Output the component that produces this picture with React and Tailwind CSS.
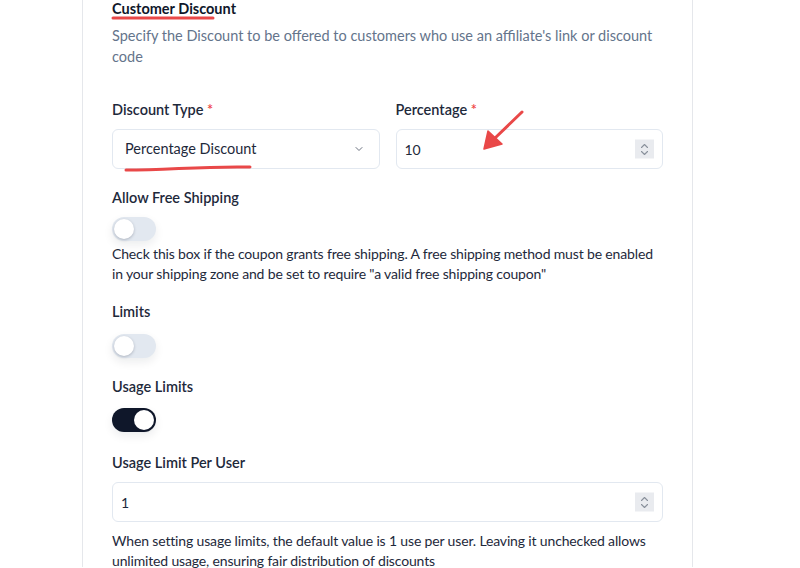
import React from "react";

function Toggle({ on }) {
  return (
    <div
      className={
        "relative h-6 w-11 rounded-full shadow-[0_4px_10px_rgba(15,23,42,0.08)] " +
        (on ? "bg-[#0f172a]" : "bg-[#e2e8f0]")
      }
    >
      <div
        className={
          "absolute top-[2px] h-5 w-5 rounded-full bg-white shadow-[0_1px_3px_rgba(15,23,42,0.25)] " +
          (on ? "left-[22px]" : "left-[2px]")
        }
      />
    </div>
  );
}

function Spinner() {
  return (
    <div className="absolute right-2 top-1/2 flex h-[19px] w-[19px] -translate-y-1/2 flex-col items-center justify-center bg-[#e9ebef]">
      <svg width="9" height="14" viewBox="0 0 9 14" fill="none" stroke="#8a919c" strokeWidth="1.1" strokeLinecap="round" strokeLinejoin="round">
        <path d="M1.5 5 L4.5 2 L7.5 5" />
        <path d="M1.5 9 L4.5 12 L7.5 9" />
      </svg>
    </div>
  );
}

export default function App() {
  return (
    <div className="relative h-[568px] w-[800px] overflow-hidden bg-white font-['Lato',sans-serif] text-[#1e293b]">
      <div className="ml-[82px] h-full w-[611px] border-x border-[#e5e7eb] px-[29px]">
        <div className="-mt-[1px] text-[14.5px] font-bold leading-5 text-[#0f172a]">Customer Discount</div>
        <p className="mt-[6px] text-[14.5px] leading-[21px] text-[#64748b]">
          Specify the Discount to be offered to customers who use an affiliate's link or discount code
        </p>

        <div className="mt-[33px] grid grid-cols-2 gap-4">
          <div>
            <div className="text-[14.5px] font-semibold leading-5">
              Discount Type <span className="text-[#ef4444]">*</span>
            </div>
            <div className="mt-[9px] flex h-10 items-center justify-between rounded-md border border-[#e2e8f0] px-3 text-[14.5px]">
              <span>Percentage Discount</span>
              <svg width="12" height="12" viewBox="0 0 24 24" fill="none" stroke="#6b7280" strokeWidth="2" strokeLinecap="round" strokeLinejoin="round" className="mr-[2px]">
                <path d="M6 9l6 6 6-6" />
              </svg>
            </div>
          </div>
          <div>
            <div className="text-[14.5px] font-semibold leading-5">
              Percentage <span className="text-[#ef4444]">*</span>
            </div>
            <div className="relative mt-[9px] flex h-10 items-center rounded-md border border-[#e2e8f0] px-2 text-[14px]">
              <span>10</span>
              <Spinner />
            </div>
          </div>
        </div>

        <div className="mt-[19px] text-[14.5px] font-semibold leading-5">Allow Free Shipping</div>
        <div className="mt-[9px]">
          <Toggle on={false} />
        </div>
        <p className="mt-[3px] text-[14px] leading-5 tracking-[-0.15px]">
          Check this box if the coupon grants free shipping. A free shipping method must be enabled in your shipping zone and be set to require "a valid free shipping coupon"
        </p>

        <div className="mt-[18px] text-[14.5px] font-semibold leading-5">Limits</div>
        <div className="mt-[12px]">
          <Toggle on={false} />
        </div>

        <div className="mt-[19px] text-[14.5px] font-semibold leading-5">Usage Limits</div>
        <div className="mt-[11px]">
          <Toggle on={true} />
        </div>

        <div className="mt-[21px] text-[14.5px] font-semibold leading-5">Usage Limit Per User</div>
        <div className="relative mt-[9px] flex h-10 items-center rounded-md border border-[#e2e8f0] px-2 text-[14px]">
          <span>1</span>
          <Spinner />
        </div>
        <p className="mt-[9px] text-[14px] leading-5 tracking-[-0.15px]">
          When setting usage limits, the default value is 1 use per user. Leaving it unchecked allows unlimited usage, ensuring fair distribution of discounts
        </p>
      </div>

      <svg className="pointer-events-none absolute left-0 top-0" width="800" height="568" viewBox="0 0 800 568" fill="none">
        <path d="M113 18 L213 18" stroke="#e94848" strokeWidth="3" strokeLinecap="round" />
        <path d="M126 170 C 170 170, 200 166, 250 167" stroke="#e94848" strokeWidth="3" strokeLinecap="round" />
        <path d="M522 112 L494 139" stroke="#e94848" strokeWidth="3" strokeLinecap="round" />
        <path d="M484 149 L488 131 L502 144 Z" fill="#e94848" stroke="#e94848" strokeWidth="1.5" strokeLinejoin="round" />
      </svg>
    </div>
  );
}
